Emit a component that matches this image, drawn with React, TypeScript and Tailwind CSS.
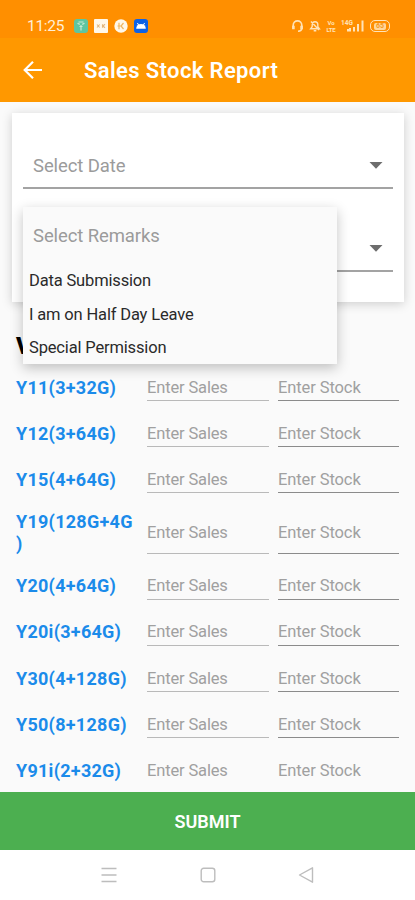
const remarks = ['Data Submission', 'I am on Half Day Leave', 'Special Permission'];

const models = [
  { name: 'Y11(3+32G)' },
  { name: 'Y12(3+64G)' },
  { name: 'Y15(4+64G)' },
  { name: 'Y19(128G+4G)', tall: true },
  { name: 'Y20(4+64G)' },
  { name: 'Y20i(3+64G)' },
  { name: 'Y30(4+128G)' },
  { name: 'Y50(8+128G)' },
  { name: 'Y91i(2+32G)', last: true },
];

function StatusBar() {
  return (
    <div className="flex h-[38px] shrink-0 items-end bg-[#ff8f00] pr-[25px] pb-[5px] pl-[27px] text-white">
      <span className="w-[47px] text-[15.5px] leading-[13px] tracking-[-0.3px] text-[#ffefd8]">11:25</span>
      <div className="flex items-center gap-[6px] text-white">
        <svg width="14" height="14" viewBox="0 0 14 14">
          <rect width="14" height="14" rx="3" fill="#5fc5a0" />
          <path d="M3.5 4.2l2.3 1.2M10.5 4.2L8.2 5.4M4.5 3h5M7 6v5.5M5.5 7.5h3" stroke="#c5ecd3" strokeWidth="1.2" fill="none" />
        </svg>
        <svg width="14" height="14" viewBox="0 0 14 14">
          <rect width="14" height="14" rx="1" fill="#fff8ea" />
          <path d="M3 5.5l2.6 3M5.6 5.5L3 8.5M8.5 5.3v3.4M11 5.3L8.8 7l2.2 1.7" stroke="#e2b67c" strokeWidth="1.1" fill="none" />
        </svg>
        <svg width="14" height="14" viewBox="0 0 14 14">
          <circle cx="7" cy="7" r="6.7" fill="#fff8ea" />
          <path d="M5 3.8v6.4M3.5 7h4M9.5 4L7 7l2.5 3" stroke="#eeb663" strokeWidth="1.2" fill="none" />
        </svg>
        <svg width="14" height="14" viewBox="0 0 14 14">
          <rect width="14" height="14" rx="3" fill="#0d62e6" />
          <path d="M2.2 9.7a4.8 4.8 0 0 1 9.6 0z" fill="#fff" />
          <path d="M4.6 6L3.4 4M9.4 6l1.2-2" stroke="#fff" strokeWidth="1" />
        </svg>
      </div>
      <div className="ml-auto flex items-center text-[#ffe3b8]">
        <svg width="13" height="14" viewBox="0 0 13 14" fill="none" stroke="currentColor" strokeWidth="1.6">
          <path d="M2.2 9.5V6.2a4.3 4.3 0 0 1 8.6 0V9c0 2.2-1.5 3.2-3.8 3.2" />
          <path d="M2.4 6.7v3.6M10.6 6.7v3.6" strokeWidth="2.6" />
        </svg>
        <svg className="ml-[5px]" width="12" height="14" viewBox="0 0 12 14" fill="none" stroke="currentColor" strokeWidth="1.4">
          <path d="M1.6 9.8h8.8L8.8 7.6V5.5a2.8 2.8 0 0 0-5.6 0v2.1zM4.7 11.7h2.6M2 2.5l8 8.5" />
        </svg>
        <span className="ml-[5px] flex w-[10px] flex-col items-center text-[6px] leading-[7px] font-bold tracking-[-0.2px]">
          <span>Vo</span>
          <span>LTE</span>
        </span>
        <svg className="ml-[5px]" width="23" height="14" viewBox="0 0 23 14" fill="currentColor">
          <text x="0" y="6" fontSize="6.5" fontWeight="700">14G</text>
          <path d="M6 10h2v2.5H6zM8 9h2v3.5H8zM12 8h2v4.5h-2zM16 5h2v7.5h-2zM20.5 1.5h2v11h-2z" />
        </svg>
        <span className="ml-[6px] flex h-[12px] w-[20px] items-center justify-center rounded-[5px] border-[1.5px] border-current">
          <span className="flex h-[7px] w-[12px] items-center justify-center rounded-[2px] bg-[#ffd79b] text-[7px] leading-[7px] font-bold text-[#f5971c]">65</span>
        </span>
      </div>
    </div>
  );
}

function AppBar() {
  return (
    <header className="flex h-16 shrink-0 items-center bg-[#ff9800] pl-[22px] text-white">
      <svg width="22" height="20" viewBox="0 0 22 20" fill="none" stroke="currentColor" strokeWidth="2.2">
        <path d="M20 10H3M11 1.7L2.7 10l8.3 8.3" />
      </svg>
      <h1 className="ml-10 pt-px text-[22px] font-semibold tracking-[0.37px]">Sales Stock Report</h1>
    </header>
  );
}

function Caret() {
  return (
    <svg width="14" height="7" viewBox="0 0 14 7">
      <path d="M0.5 0h13L7 6.8z" fill="#6d6d6d" />
    </svg>
  );
}

function RemarksMenu() {
  return (
    <div className="absolute top-[94px] left-[11px] z-10 flex h-[157px] w-[314px] flex-col bg-[#fafafa] pt-px shadow-[0_4px_12px_rgba(0,0,0,0.24)]">
      <div className="flex h-[57px] shrink-0 items-center pt-px pl-[10px] text-[18.5px] tracking-[-0.1px] text-[#9b9b9b]">Select Remarks</div>
      {remarks.map((remark) => (
        <div key={remark} className="flex h-[33.4px] shrink-0 items-center pl-[6px] text-[16.5px] tracking-[-0.16px] text-[#2a2a2a]">
          {remark}
        </div>
      ))}
    </div>
  );
}

function FilterCard() {
  return (
    <section className="relative mx-3 mt-[11px] h-[189px] w-[392px] shrink-0 bg-white px-[11px] shadow-[0_2px_10px_rgba(0,0,0,0.18)]">
      <div className="mt-[31px] flex h-[45px] items-center justify-between border-b-2 border-[#a3a3a3] pr-[10px] pl-[10px]">
        <span className="pt-[2px] text-[18.5px] tracking-[-0.1px] text-[#9b9b9b]">Select Date</span>
        <Caret />
      </div>
      <div className="mt-[38px] flex h-[45px] items-center justify-end border-b-2 border-[#a3a3a3] pr-[10px]">
        <Caret />
      </div>
      <RemarksMenu />
    </section>
  );
}

function ModelRow({ name, tall, last }: { name: string; tall?: boolean; last?: boolean }) {
  return (
    <div className={`flex shrink-0 items-center pl-4 ${tall ? 'h-[60px]' : 'h-[46.2px]'}`}>
      <div className="w-[121px] pt-px text-[18px] leading-[22px] font-bold tracking-[0.27px] [line-break:anywhere] text-[#1b8bea]">{name}</div>
      <div className={`ml-[10px] flex w-[122px] items-center border-b pt-[3px] text-[16.5px] tracking-[-0.15px] text-[#a0a0a0] ${tall ? 'h-[42px]' : 'h-[28px]'} ${last ? 'border-transparent' : 'border-[#b9b9b9]'}`}>
        Enter Sales
      </div>
      <div className={`ml-[9px] flex w-[121px] items-center border-b pt-[3px] text-[16.5px] tracking-[-0.1px] text-[#a0a0a0] ${tall ? 'h-[42px]' : 'h-[28px]'} ${last ? 'border-transparent' : 'border-[#8b8b8b]'}`}>
        Enter Stock
      </div>
    </div>
  );
}

function NavBar() {
  return (
    <nav className="flex h-[50px] shrink-0 items-center bg-white pl-[101px] text-[#bdbdbd]">
      <svg width="16" height="16" viewBox="0 0 16 16" stroke="currentColor" strokeWidth="1.4">
        <path d="M0.5 1.5h15M0.5 8h15M0.5 14.5h15" />
      </svg>
      <svg className="ml-[83px]" width="16" height="16" viewBox="0 0 16 16" fill="none" stroke="currentColor" strokeWidth="1.4">
        <rect x="1.2" y="1.2" width="13.6" height="13.6" rx="2.5" />
      </svg>
      <svg className="ml-[82px]" width="16" height="16" viewBox="0 0 16 16" fill="none" stroke="currentColor" strokeWidth="1.4" strokeLinejoin="round">
        <path d="M14.5 0.8v14.4L1.5 8z" />
      </svg>
    </nav>
  );
}

export default function App() {
  return (
    <div className="flex h-[900px] w-[415px] flex-col overflow-hidden bg-[#fafafa] font-[Roboto,sans-serif]">
      <StatusBar />
      <AppBar />
      <main className="flex min-h-0 flex-1 flex-col overflow-hidden">
        <FilterCard />
        <h2 className="mt-[29px] h-[33px] shrink-0 pt-px pl-4 text-[23px] leading-[30px] font-black text-black">V</h2>
        {models.map((model) => (
          <ModelRow key={model.name} {...model} />
        ))}
      </main>
      <button className="h-[58px] shrink-0 bg-[#4caf50] text-[18px] font-semibold text-white">SUBMIT</button>
      <NavBar />
    </div>
  );
}
